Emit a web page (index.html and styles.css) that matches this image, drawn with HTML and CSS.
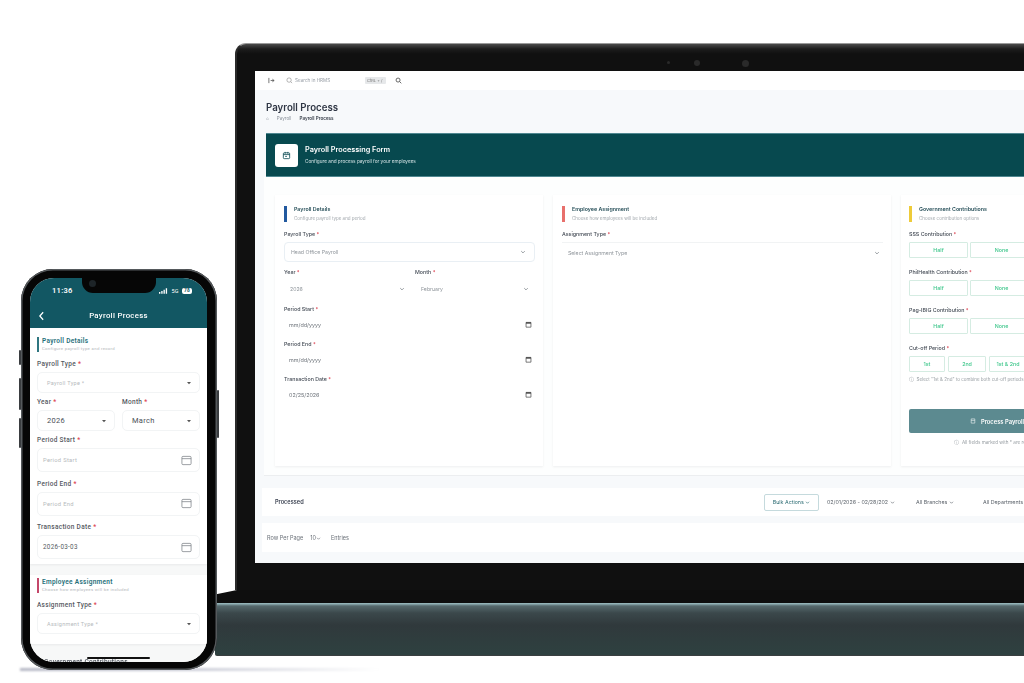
FILE: index.html
```html
<!DOCTYPE html>
<html lang="en">
<head>
  <meta charset="UTF-8">
  <title>Payroll Process</title>
  <link rel="stylesheet" href="styles.css">
</head>
<body>

  <svg class="defs" width="0" height="0">
    <symbol id="chev" viewBox="0 0 10 10"><path d="M2 3.500l3 3 3-3" fill="none" stroke="currentColor" stroke-width="1.300"/></symbol>
    <symbol id="cal" viewBox="0 0 10 10"><path d="M1.500 2h7v6.800h-7z" fill="none" stroke="currentColor" stroke-width="1"/><path d="M1.500 1.800h7v2h-7z" fill="currentColor"/></symbol>
    <symbol id="pcal" viewBox="0 0 12 12"><rect x="1" y="1.500" width="10" height="9" rx="1.200" fill="none" stroke="currentColor" stroke-width=".8"/><path d="M1 4h10" stroke="currentColor" stroke-width=".8"/></symbol>
    <symbol id="caret" viewBox="0 0 6 6"><path d="M1 2h4L3 4.200z" fill="currentColor"/></symbol>
  </svg>

  <div class="stage">

    <div class="laptop">
      <div class="lid">
        <div class="cams"><i class="cam-a"></i><i class="cam-b"></i><i class="cam-c"></i></div>
        <div class="screen">

          <div class="topbar">
            <svg class="tb-toggle" viewBox="0 0 8 8"><path d="M1 1v6M3 4h4M5 2.500L7 4 5 5.500" fill="none" stroke="#555" stroke-width=".9"/></svg>
            <svg class="tb-search" viewBox="0 0 8 8"><circle cx="3.500" cy="3.500" r="2.500" fill="none" stroke="#888" stroke-width=".7"/><path d="M5.400 5.400L7 7" stroke="#888" stroke-width=".7"/></svg>
            <span class="tb-text">Search in HRMS</span>
            <span class="tb-kbd">CtRL + /</span>
            <svg class="tb-icon" viewBox="0 0 8 8"><circle cx="3.500" cy="3.500" r="2.300" fill="none" stroke="#555" stroke-width="1"/><path d="M5.200 5.200L7.200 7.200" stroke="#555" stroke-width="1"/></svg>
          </div>

          <div class="page-head">
            <h1>Payroll Process</h1>
            <div class="crumbs"><span>⌂</span><span>Payroll</span><b>Payroll Process</b></div>
          </div>

          <div class="banner">
            <div class="banner-icon">
              <svg viewBox="0 0 10 10"><rect x="1.500" y="2" width="7" height="6.500" rx="1" fill="none" stroke="#0b4a53" stroke-width=".9"/><path d="M1.500 4h7M3.500 1v2M6.500 1v2" stroke="#0b4a53" stroke-width=".9"/><path d="M3.500 6h2" stroke="#0b4a53" stroke-width=".9"/></svg>
            </div>
            <div>
              <div class="banner-title">Payroll Processing Form</div>
              <div class="banner-sub">Configure and process payroll for your employees</div>
            </div>
          </div>

          <div class="form-area">
            <section class="card card-details">
              <div class="sec-head sec-blue">
                <div class="sec-title">Payroll Details</div>
                <div class="sec-sub">Configure payroll type and period</div>
              </div>
              <label class="lbl">Payroll Type <em>*</em></label>
              <div class="select select-box"><span>Head Office Payroll</span><svg><use href="#chev"/></svg></div>
              <div class="two">
                <div>
                  <label class="lbl">Year <em>*</em></label>
                  <div class="select"><span>2026</span><svg><use href="#chev"/></svg></div>
                </div>
                <div>
                  <label class="lbl">Month <em>*</em></label>
                  <div class="select"><span>February</span><svg><use href="#chev"/></svg></div>
                </div>
              </div>
              <label class="lbl">Period Start <em>*</em></label>
              <div class="date"><span>mm/dd/yyyy</span><svg><use href="#cal"/></svg></div>
              <label class="lbl">Period End <em>*</em></label>
              <div class="date"><span>mm/dd/yyyy</span><svg><use href="#cal"/></svg></div>
              <label class="lbl">Transaction Date <em>*</em></label>
              <div class="date"><span>02/25/2026</span><svg><use href="#cal"/></svg></div>
            </section>

            <section class="card card-assign">
              <div class="sec-head sec-red">
                <div class="sec-title">Employee Assignment</div>
                <div class="sec-sub">Choose how employees will be included</div>
              </div>
              <label class="lbl">Assignment Type <em>*</em></label>
              <div class="select select-line"><span>Select Assignment Type</span><svg><use href="#chev"/></svg></div>
            </section>

            <section class="card card-gov">
              <div class="sec-head sec-yellow">
                <div class="sec-title">Government Contributions</div>
                <div class="sec-sub">Choose contribution options</div>
              </div>
              <label class="lbl">SSS Contribution <em>*</em></label>
              <div class="opts"><span>Half</span><span>None</span></div>
              <label class="lbl">PhilHealth Contribution <em>*</em></label>
              <div class="opts"><span>Half</span><span>None</span></div>
              <label class="lbl">Pag-IBIG Contribution <em>*</em></label>
              <div class="opts"><span>Half</span><span>None</span></div>
              <label class="lbl">Cut-off Period <em>*</em></label>
              <div class="opts opts-cut"><span>1st</span><span>2nd</span><span>1st &amp; 2nd</span></div>
              <p class="cut-note">ⓘ&nbsp; Select "1st &amp; 2nd" to combine both cut-off periods into one payroll for payrolls</p>
              <div class="process">
                <svg viewBox="0 0 10 10"><path d="M2 1.500h6v7H2zM2 4h6" fill="none" stroke="#fff" stroke-width=".9"/></svg>
                Process Payroll
              </div>
              <p class="all-note">ⓘ&nbsp; All fields marked with * are required</p>
            </section>
          </div>

          <div class="processed">
            <span class="processed-title">Processed</span>
            <div class="processed-tools">
              <span class="bulk">Bulk Actions <svg><use href="#chev"/></svg></span>
              <span class="tool tool-date">02/01/2026 - 02/28/202 <svg><use href="#chev"/></svg></span>
              <span class="tool tool-branch">All Branches <svg><use href="#chev"/></svg></span>
              <span class="tool">All Departments</span>
            </div>
          </div>

          <div class="rows">Row Per Page <span class="rows-num">10<svg><use href="#chev"/></svg></span> Entries</div>
        </div>
      </div>
      <div class="deck"></div>
      <div class="base"></div>
    </div>

    <div class="phone-shadow"></div>

    <div class="phone">
      <i class="btn btn-a"></i><i class="btn btn-b"></i><i class="btn btn-c"></i><i class="btn btn-d"></i>
      <div class="phone-screen">
        <div class="notch"><i></i></div>
        <div class="p-header">
          <div class="p-status">
            <span class="p-time">11:36</span>
            <span class="p-right">
              <svg viewBox="0 0 10 6"><path d="M0 4h1.500v2H0zM2.500 3H4v3H2.500zM5 1.500h1.500V6H5zM7.500 0H9v6H7.500z" fill="#fff"/></svg>
              5G <b>78</b>
            </span>
          </div>
          <div class="p-nav">
            <svg viewBox="0 0 8 12"><path d="M6 1.500L2 6l4 4.500" fill="none" stroke="#fff" stroke-width="1.500"/></svg>
            <span>Payroll Process</span>
          </div>
        </div>

        <div class="p-body">
          <div class="p-card p-card-first">
            <div class="p-sec p-sec-teal">
              <div class="p-sec-title">Payroll Details</div>
              <div class="p-sec-sub">Configure payroll type and record</div>
            </div>
            <label class="p-lbl">Payroll Type <em>*</em></label>
            <div class="p-field p-field-sel"><span class="ph">Payroll Type *</span><svg class="caret"><use href="#caret"/></svg></div>
            <div class="p-two">
              <div>
                <label class="p-lbl">Year <em>*</em></label>
                <div class="p-field p-field-sel"><span class="val">2026</span><svg class="caret"><use href="#caret"/></svg></div>
              </div>
              <div>
                <label class="p-lbl">Month <em>*</em></label>
                <div class="p-field p-field-sel"><span class="val">March</span><svg class="caret"><use href="#caret"/></svg></div>
              </div>
            </div>
            <label class="p-lbl">Period Start <em>*</em></label>
            <div class="p-field p-field-date"><span class="ph ph-date">Period Start</span><svg class="pcal"><use href="#pcal"/></svg></div>
            <label class="p-lbl">Period End <em>*</em></label>
            <div class="p-field p-field-date"><span class="ph ph-date">Period End</span><svg class="pcal"><use href="#pcal"/></svg></div>
            <label class="p-lbl">Transaction Date <em>*</em></label>
            <div class="p-field p-field-date"><span class="date-val">2026-03-03</span><svg class="pcal"><use href="#pcal"/></svg></div>
          </div>

          <div class="p-card p-card-second">
            <div class="p-sec p-sec-red">
              <div class="p-sec-title">Employee Assignment</div>
              <div class="p-sec-sub">Choose how employees will be included</div>
            </div>
            <label class="p-lbl">Assignment Type <em>*</em></label>
            <div class="p-field p-field-sel"><span class="ph">Assignment Type *</span><svg class="caret"><use href="#caret"/></svg></div>
          </div>

          <div class="p-next">Government Contributions</div>
        </div>
        <div class="home-bar"></div>
      </div>
    </div>

  </div>

</body>
</html>
```

FILE: styles.css
```css
html, body {
  margin: 0;
  height: 100%;
  background: #fff;
  overflow: hidden;
}

.defs { position: absolute; }

.stage {
  position: relative;
  width: 1024px;
  height: 683px;
  overflow: hidden;
  font-family: Inter, "Liberation Sans", sans-serif;
}

/* laptop */
.laptop {
  position: absolute;
  left: 215px;
  top: 43px;
  width: 860px;
  filter: blur(0.4px);
}

.lid {
  position: relative;
  margin-left: 20px;
  height: 547px;
  background: linear-gradient(#4a4a4a 0, #1c1c1c 5px, #101010 10px);
  border-top: 1px solid #9a9a9a;
  border-left: 2px solid #2a2a2a;
  border-radius: 11px 11px 0 0;
  padding: 27px 0 0 18px;
  box-sizing: border-box;
}

.cams i {
  position: absolute;
  top: 16px;
  border-radius: 50%;
  background: #2a2a2a;
}
.cam-a { left: 430px; width: 3px; height: 3px; margin-top: 1px; }
.cam-b { left: 457px; width: 6px; height: 6px; }
.cam-c { left: 505px; width: 7px; height: 7px; }

.screen {
  height: 492px;
  background: #f7f9fb;
  color: #333a45;
  overflow: hidden;
}

.topbar {
  height: 19px;
  background: #fff;
  display: flex;
  align-items: center;
  padding-left: 13px;
}
.topbar svg { width: 7px; height: 7px; }
.tb-search { margin-left: 11px; width: 6px; height: 6px; }
.tb-text { margin-left: 2px; width: 70px; font-size: 4.600px; color: #9aa0a8; }
.tb-kbd { background: #e6e8ea; color: #777; font-size: 4px; padding: 1px 2px; border-radius: 1px; width: 17px; }
.tb-icon { margin-left: 9px; }

.page-head {
  padding: 11px 0 0 11px;
  height: 43px;
  box-sizing: border-box;
}
.page-head h1 {
  margin: 0;
  font-size: 9.700px;
  line-height: 14px;
  font-weight: 600;
  color: #2f3644;
}
.crumbs {
  display: flex;
  gap: 8px;
  font-size: 4.600px;
  line-height: 7px;
  color: #8b929b;
}
.crumbs b { color: #3b424d; font-weight: 600; }

.banner {
  margin-left: 11px;
  height: 44px;
  background: #07494f;
  border-top: 1px solid #4f8790;
  border-bottom: 1px solid #4f8790;
  box-sizing: border-box;
  display: flex;
  align-items: center;
  gap: 7px;
  padding-left: 9px;
  color: #fff;
}
.banner-icon {
  width: 23px;
  height: 23px;
  background: #fff;
  border-radius: 3px;
  display: flex;
  align-items: center;
  justify-content: center;
}
.banner-icon svg { width: 9px; height: 9px; }
.banner-title { font-size: 7.300px; font-weight: 600; line-height: 10px; }
.banner-sub { font-size: 4.700px; line-height: 7px; margin-top: 3px; color: #d5e4e6; }

.form-area {
  margin-left: 9px;
  height: 299px;
  background: #fdfefe;
  display: flex;
  gap: 10px;
  padding: 18px 0 0 11px;
  box-sizing: border-box;
  border-bottom: 1px solid #eceef0;
  width: 900px;
}

.card {
  height: 271px;
  background: #fff;
  box-shadow: 0 1px 2px rgba(60, 70, 80, 0.08);
  padding: 11px 8px 0 9px;
  box-sizing: border-box;
  flex: none;
}
.card-details { width: 268px; }
.card-assign { width: 338px; }
.card-gov { width: 190px; padding-left: 8px; }

.sec-head {
  border-left: 3px solid;
  padding-left: 7px;
  height: 16px;
  margin-bottom: 8px;
}
.sec-blue { border-color: #22599f; }
.sec-red { border-color: #e8706c; }
.sec-yellow { border-color: #eecb3a; }
.sec-title { font-size: 5.300px; line-height: 7px; font-weight: 600; color: #28505a; }
.sec-sub { font-size: 4.500px; line-height: 7px; margin-top: 2px; color: #a3a9ae; }

.lbl {
  display: block;
  font-size: 5.300px;
  line-height: 8px;
  font-weight: 500;
  color: #454c56;
}
.lbl em { color: #dc3c4c; font-style: normal; }

.select {
  display: flex;
  align-items: center;
  justify-content: space-between;
  height: 20px;
  font-size: 5.200px;
  color: #8f959b;
  padding: 0 8px 0 6px;
  box-sizing: border-box;
}
.select svg { width: 6px; height: 6px; color: #7d8389; }
.select-box {
  margin: 4px 0 6px;
  border: 1px solid #e9eff4;
  border-radius: 4px;
}
.select-line {
  margin-top: 4px;
  border-top: 1px solid #f1f3f4;
  padding-right: 3px;
}

.two { display: grid; grid-template-columns: 131px 120px; }
.two .select { height: 18px; margin: 4px 0 7px; padding-right: 10px; }
.two > div + div .select { padding-right: 6px; }

.date {
  display: flex;
  align-items: center;
  justify-content: space-between;
  height: 20px;
  font-size: 5.400px;
  color: #6b7178;
  padding: 0 3px 0 5px;
  margin: 1.500px 0 5.500px;
}
.date svg { width: 7px; height: 7px; color: #444; }

.opts { display: flex; gap: 2px; margin: 4px 0 10px; }
.opts span {
  width: 59px;
  height: 16px;
  box-sizing: border-box;
  border: 1px solid #d5ece2;
  border-radius: 1px;
  font-size: 5.300px;
  font-weight: 500;
  line-height: 14px;
  text-align: center;
  color: #3cc68a;
}
.opts span + span { width: 63px; }
.opts-cut { gap: 3px; margin-bottom: 4px; }
.opts-cut span { width: 36px; }
.opts-cut span + span { width: 38px; }

.cut-note {
  margin: 0;
  height: 33px;
  width: 176px;
  font-size: 4.500px;
  line-height: 8px;
  color: #9aa0a5;
}
.process {
  width: 176px;
  height: 24px;
  background: #5c8a90;
  border-radius: 2px;
  display: flex;
  align-items: center;
  justify-content: center;
  gap: 5px;
  color: #fff;
  font-size: 5.800px;
  font-weight: 600;
}
.process svg { width: 6px; height: 6px; }
.all-note {
  margin: 6px 0 0;
  width: 176px;
  text-align: center;
  font-size: 4.600px;
  line-height: 8px;
  color: #9aa0a5;
  white-space: nowrap;
}

.processed {
  margin: 12px 0 0 7px;
  width: 900px;
  height: 28px;
  background: #fff;
  display: flex;
  align-items: center;
  box-sizing: border-box;
  padding-left: 13px;
}
.processed-title { font-size: 5.600px; font-weight: 600; color: #3a4150; width: 489px; }
.processed-tools {
  display: flex;
  align-items: center;
  font-size: 5.300px;
  color: #5c636b;
  white-space: nowrap;
}
.processed-tools svg { width: 5px; height: 5px; vertical-align: -1px; }
.bulk {
  border: 1px solid #c5dadd;
  border-radius: 2px;
  width: 55px;
  height: 17px;
  box-sizing: border-box;
  line-height: 15px;
  text-align: center;
  color: #2c6c73;
  margin-right: 8px;
}
.tool-date { width: 89px; }
.tool-branch { width: 67px; }

.rows {
  margin: 7px 0 0 7px;
  width: 900px;
  height: 29px;
  background: #fff;
  display: flex;
  align-items: center;
  gap: 7px;
  padding-left: 5px;
  font-size: 5.500px;
  color: #6a7078;
}
.rows-num { margin-right: 3px; }
.rows-num svg { width: 5px; height: 5px; vertical-align: -1px; }

.deck {
  height: 13px;
  background: #0e0e0e;
  clip-path: polygon(0 35%, 22px 0, 100% 0, 100% 100%, 0 100%);
}
.base {
  height: 53px;
  background: linear-gradient(#9dbcc1 0, #8aa9ae 1px, #56696d 3px, #3b484b 10px, #30393c 22px, #2e4140 100%);
  border-bottom: 1px solid #3a3f40;
  box-sizing: border-box;
  border-radius: 0 0 0 2px;
}

/* phone */
.phone-shadow {
  position: absolute;
  left: 20px;
  top: 668px;
  width: 360px;
  height: 3px;
  background: linear-gradient(90deg, #b7b9c6, #c9cbd6 45%, #fff);
  filter: blur(1px);
}

.phone {
  position: absolute;
  left: 21px;
  top: 269px;
  width: 196px;
  height: 401px;
  background: #060606;
  border-radius: 32px;
  box-shadow: inset 0 0 0 1.500px #55595c;
  filter: blur(0.4px);
}

.btn { position: absolute; background: #3a3d40; width: 2px; border-radius: 1px; }
.btn-a { left: -2px; top: 81px; height: 15px; }
.btn-b { left: -2px; top: 109px; height: 32px; }
.btn-c { left: -2px; top: 149px; height: 30px; }
.btn-d { right: -2px; top: 121px; height: 48px; }

.phone-screen {
  position: absolute;
  left: 9px;
  top: 9px;
  width: 177px;
  height: 384px;
  background: #fff;
  border-radius: 24px;
  overflow: hidden;
  font-family: Roboto, "Liberation Sans", sans-serif;
  letter-spacing: 0.3px;
}

.notch {
  position: absolute;
  left: 52px;
  top: 0;
  width: 74px;
  height: 15px;
  background: #060606;
  border-radius: 0 0 11px 11px;
}
.notch i {
  position: absolute;
  left: 7px;
  top: 2px;
  width: 7px;
  height: 7px;
  border-radius: 50%;
  background: #1d2428;
}

.p-header {
  height: 50px;
  background: #125763;
  color: #fff;
}
.p-status {
  display: flex;
  justify-content: space-between;
  align-items: center;
  padding: 7px 15px 0 22px;
  height: 11px;
  font-size: 6.800px;
}
.p-time { font-weight: 600; font-size: 7.500px; }
.p-right { display: flex; align-items: center; gap: 3px; font-size: 5.500px; }
.p-right svg { width: 9px; height: 6px; }
.p-right b {
  background: #fff;
  color: #125763;
  border-radius: 2px;
  font-size: 4.800px;
  line-height: 6px;
  padding: 0 2px;
}
.p-nav {
  position: relative;
  text-align: center;
  font-size: 7.800px;
  font-weight: 500;
  line-height: 12px;
  margin-top: 14px;
}
.p-nav svg { position: absolute; left: 8px; top: 1px; width: 7px; height: 10px; }

.p-body {
  background: #f7f8f8;
  height: 334px;
  overflow: hidden;
}
.p-card {
  background: #fff;
  padding: 9px 7px 0 7px;
  box-shadow: 0 1px 2px rgba(60, 70, 80, 0.08);
}
.p-card-first { height: 236px; box-sizing: border-box; }
.p-card-second { margin-top: 11px; height: 69px; box-sizing: border-box; padding-top: 3px; }

.p-sec {
  border-left: 2px solid;
  padding-left: 3px;
  height: 15px;
  margin-bottom: 8px;
}
.p-sec-teal { border-color: #2f7680; }
.p-sec-red { border-color: #c4476a; }
.p-sec-title { font-size: 6.500px; line-height: 8px; font-weight: 600; color: #27707a; }
.p-sec-sub { font-size: 4.300px; line-height: 6px; margin-top: 1px; color: #b2b6ba; }

.p-lbl {
  display: block;
  font-size: 6.500px;
  line-height: 9px;
  font-weight: 500;
  color: #55595f;
}
.p-lbl em { color: #dc3c4c; font-style: normal; }

.p-field {
  display: flex;
  align-items: center;
  justify-content: space-between;
  box-sizing: border-box;
  border: 1px solid #f2f4f5;
  border-radius: 5px;
  margin: 3px 0 5px;
  background: #fff;
}
.p-field-sel { height: 21px; padding: 0 7px 0 9px; }
.p-field-date { height: 24px; padding: 0 7px 0 5px; margin-bottom: 7.500px; }
.p-two { display: grid; grid-template-columns: 78px 78px; gap: 7px; }

.ph { font-size: 5.500px; color: #b6babd; }
.ph-date { font-size: 5.800px; }
.val { font-size: 7.500px; color: #4a5057; }
.date-val { font-size: 6.300px; color: #555b62; }
.caret { width: 6px; height: 6px; color: #555; }
.pcal { width: 11px; height: 11px; color: #777d82; }

.p-next {
  padding: 14px 0 0 14px;
  font-size: 6.500px;
  font-weight: 500;
  color: #4c525a;
}

.home-bar {
  position: absolute;
  left: 57px;
  bottom: 3px;
  width: 63px;
  height: 2px;
  background: #111;
  border-radius: 1px;
}
```
